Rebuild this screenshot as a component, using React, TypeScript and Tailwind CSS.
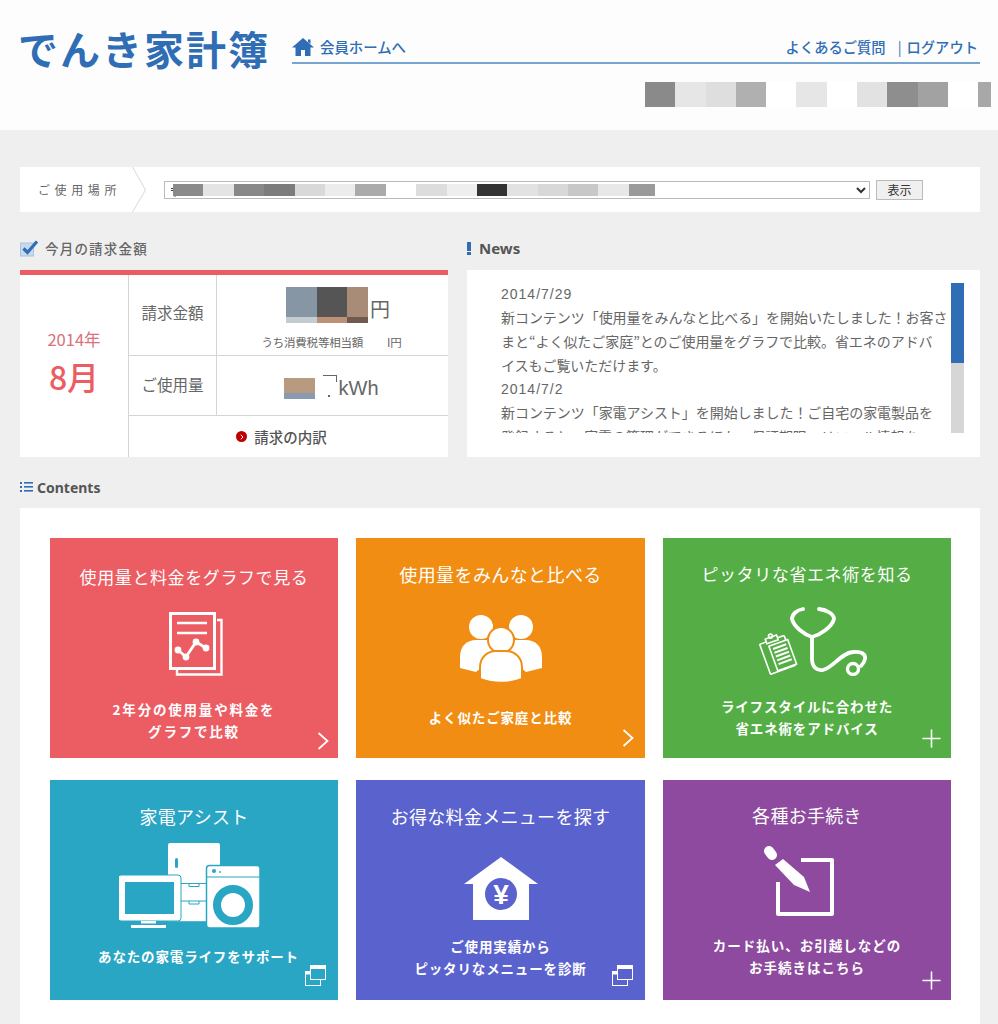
import { ChevronRight, Plus } from 'lucide-react'

const FONT = "font-['Noto_Sans_CJK_JP','Noto_Sans',sans-serif]"

const TOP_BLOCKS = ['bg-[#8a8a8a]', 'bg-[#e6e6e6]', 'bg-[#dedede]', 'bg-[#b0b0b0]', 'bg-white', 'bg-[#e6e6e6]', 'bg-white', 'bg-[#e2e2e2]', 'bg-[#8e8e8e]', 'bg-[#a2a2a2]', 'bg-white', 'bg-[#a8a8a8]']
const SELECT_BLOCKS = ['bg-[#8a8a8a]', 'bg-[#e4e4e4]', 'bg-[#888888]', 'bg-[#7c7c7c]', 'bg-[#d9d9d9]', 'bg-[#ececec]', 'bg-[#aaaaaa]', 'bg-white', 'bg-[#dddddd]', 'bg-[#eeeeee]', 'bg-[#333333]', 'bg-[#e2e2e2]', 'bg-[#d8d8d8]', 'bg-[#c8c8c8]', 'bg-[#e8e8e8]', 'bg-[#9a9a9a]']

function HomeIcon() {
  return (
    <svg width="22" height="18" viewBox="0 0 22 18" className="shrink-0">
      <path d="M11 0 L22 9.5 H18.5 V18 H13 V12 H9 V18 H3.5 V9.5 H0 Z M16 1.5 H18.5 V6 L16 4 Z" fill="#2f6db5" />
    </svg>
  )
}

function CheckIcon() {
  return (
    <svg width="19" height="17" viewBox="0 0 19 17" className="shrink-0">
      <rect x="0.5" y="3" width="13" height="13" fill="#c9d9ec" stroke="#a9c3e0" />
      <path d="M3.5 8.5 L7.5 12.5 L17 1.5" fill="none" stroke="#2f6db5" strokeWidth="3.2" />
    </svg>
  )
}

function ListIcon() {
  return (
    <svg width="13" height="10" viewBox="0 0 13 10" className="shrink-0">
      <g fill="#2f6db5">
        <rect x="0" y="0" width="2" height="2" />
        <rect x="0" y="4" width="2" height="2" />
        <rect x="0" y="8" width="2" height="2" />
        <rect x="4" y="0" width="9" height="1.6" />
        <rect x="4" y="4" width="9" height="1.6" />
        <rect x="4" y="8" width="9" height="1.6" />
      </g>
    </svg>
  )
}

function DocIcon() {
  return (
    <svg width="54" height="64" viewBox="0 0 54 64" fill="none" stroke="#fff">
      <rect x="1.5" y="1.5" width="44" height="55" strokeWidth="3" />
      <path d="M48 8 H52.5 V62.5 H8 V58" strokeWidth="2.4" />
      <path d="M8 11 H38 M8 21 H38" strokeWidth="2.6" />
      <path d="M9 38 L17 45 L27 30 L37 36" strokeWidth="2.8" />
      <g fill="#fff" stroke="none">
        <circle cx="9" cy="38" r="3.4" />
        <circle cx="17" cy="45" r="3.4" />
        <circle cx="27" cy="30" r="3.4" />
        <circle cx="37" cy="36" r="3.4" />
      </g>
    </svg>
  )
}

function PeopleIcon() {
  return (
    <svg width="82" height="68" viewBox="0 0 82 68">
      <g fill="#fff">
        <circle cx="21" cy="12" r="12" />
        <circle cx="61" cy="12" r="12" />
        <path d="M0 53 V42 C0 30 8 25 16 25 H28 L36 40 L16 57 Z" />
        <path d="M82 53 V42 C82 30 74 25 66 25 H54 L46 40 L66 57 Z" />
      </g>
      <circle cx="41" cy="25" r="13" fill="#fff" stroke="#f08d12" strokeWidth="2" />
      <path d="M20 64 V52 C20 42 28 36 36 36 H46 C54 36 62 42 62 52 V64 C50 69 32 69 20 64 Z" fill="#fff" stroke="#f08d12" strokeWidth="2" />
    </svg>
  )
}

function StethoscopeIcon() {
  return (
    <svg width="110" height="69" viewBox="0 0 110 69" fill="none" stroke="#fff" strokeLinecap="round">
      <path d="M46 2 C40 3 35 7 35 12 C37 20 48 28 55 30 C63 28 75 20 77 12 C77 7 70 3 62 2" strokeWidth="3.8" />
      <path d="M55 30 V52 C55 60 60 64 66 63 C76 61 84 46 96 45 C104 44 109 47 108 52 C107.5 55 106 57 104 59" strokeWidth="3.8" />
      <circle cx="96" cy="62" r="5.5" strokeWidth="3.4" />
      <g transform="rotate(-20 20 47)" strokeWidth="1.6">
        <rect x="7" y="32" width="26" height="32" rx="1" />
        <rect x="14" y="29" width="12" height="5" fill="#55ae45" />
        <circle cx="20" cy="28" r="2" />
        <rect x="15" y="37" width="20" height="26" fill="#55ae45" />
        <path d="M18 41 H32 M18 45 H32 M18 49 H32 M18 53 H32 M18 57 H32" strokeWidth="2" strokeLinecap="butt" />
      </g>
    </svg>
  )
}

function AppliancesIcon() {
  return (
    <svg width="141" height="85" viewBox="0 0 141 85">
      <path d="M51 0 H99 Q101 0 101 2 V40 H88 V77 H62 V40 H49 V2 Q49 0 51 0 Z" fill="#fff" />
      <rect x="56" y="15" width="3" height="10" rx="1.5" fill="#28a6c4" />
      <path d="M62 40.5 H88 M62 58 H88 M70 40.5 V43.5 H80 V40.5 M70 58 V61 H80 V58" fill="none" stroke="#28a6c4" strokeWidth="1" />
      <rect x="50" y="77" width="38" height="1.2" fill="#fff" />
      <rect x="87.5" y="22.5" width="53.5" height="62.5" rx="3" fill="#fff" stroke="#28a6c4" strokeWidth="1.5" />
      <rect x="88" y="33.5" width="53" height="1" fill="#28a6c4" />
      <circle cx="95" cy="28" r="2" fill="#28a6c4" />
      <circle cx="101" cy="29" r="0.9" fill="#28a6c4" />
      <circle cx="114" cy="62" r="16" fill="none" stroke="#28a6c4" strokeWidth="8" />
      <rect x="-1" y="32" width="63" height="46" rx="3" fill="#fff" stroke="#28a6c4" strokeWidth="1" />
      <rect x="6" y="39" width="49" height="32" fill="#28a6c4" />
      <rect x="22" y="78" width="15" height="2.5" fill="#fff" />
      <rect x="12" y="82" width="35" height="3" fill="#fff" />
    </svg>
  )
}

function YenHouseIcon() {
  return (
    <svg width="74" height="63" viewBox="0 0 74 63">
      <path d="M37 0 L74 27 H65 V63 H9 V27 H0 Z" fill="#fff" />
      <circle cx="37" cy="37" r="16" fill="#5a62cd" />
      <text x="37" y="47" textAnchor="middle" fontSize="28" fontWeight="700" fill="#fff" fontFamily="Liberation Sans, sans-serif">¥</text>
    </svg>
  )
}

function PencilIcon() {
  return (
    <svg width="70" height="70" viewBox="0 0 70 70">
      <path d="M37 14 H68 V68 H14 V36" fill="none" stroke="#fff" strokeWidth="4" strokeLinejoin="round" />
      <path d="M5 5 L8 9" stroke="#fff" strokeWidth="10" strokeLinecap="round" />
      <path d="M11 19 L19 13 L40 31 L46 46 L30 39 Z" fill="#fff" />
    </svg>
  )
}

function CornerChevron({ className }: { className: string }) {
  return (
    <svg width="12" height="18" viewBox="0 0 12 18" className={`absolute ${className}`}>
      <path d="M1.5 1 L10.5 9 L1.5 17" fill="none" stroke="#fff" strokeWidth="1.8" />
    </svg>
  )
}

function WindowIcon() {
  return (
    <svg width="21" height="21" viewBox="0 0 21 21" className="absolute right-[12px] bottom-[14px]">
      <rect x="0.5" y="6.5" width="15" height="14" fill="none" stroke="#fff" />
      <rect x="0.5" y="6.5" width="5" height="3" fill="#fff" />
      <rect x="5.5" y="0.5" width="15" height="14" fill="currentColor" stroke="#fff" />
      <rect x="5.5" y="0.5" width="15" height="3.5" fill="#fff" />
    </svg>
  )
}

const TILES = [
  { title: '使用量と料金をグラフで見る', sub: ['2年分の使用量や料金を', 'グラフで比較'], bg: 'bg-[#eb5c63] text-[#eb5c63]', titleCls: 'mt-[27px] text-[17px] tracking-[0.6px]', iconCls: 'mt-[23px] h-[64px] ml-[4px]', subCls: 'mt-[22px] tracking-[1.8px]', icon: <DocIcon />, corner: 'chevron', chevronCls: 'right-[9px] bottom-[8px]' },
  { title: '使用量をみんなと比べる', sub: ['よく似たご家庭と比較'], bg: 'bg-[#f08d12] text-[#f08d12]', titleCls: 'mt-[24px] text-[18px] tracking-[0.4px]', iconCls: 'mt-[29px] h-[68px]', subCls: 'mt-[23px] tracking-[0.85px]', icon: <PeopleIcon />, corner: 'chevron', chevronCls: 'right-[11px] bottom-[11px]' },
  { title: 'ピッタリな省エネ術を知る', sub: ['ライフスタイルに合わせた', '省エネ術をアドバイス'], bg: 'bg-[#55ae45] text-[#55ae45]', titleCls: 'mt-[24px] text-[17px] tracking-[0.6px]', iconCls: 'mt-[21px] h-[69px] ml-[10px]', subCls: 'mt-[19px] tracking-[0.85px]', icon: <StethoscopeIcon />, corner: 'plus', chevronCls: '' },
  { title: '家電アシスト', sub: ['あなたの家電ライフをサポート'], bg: 'bg-[#28a6c4] text-[#28a6c4]', titleCls: 'mt-[24px] text-[18px] tracking-[0.3px]', iconCls: 'mt-[15px] h-[85px] ml-[-10px]', subCls: 'mt-[17px] ml-[9px] tracking-[0.85px]', icon: <AppliancesIcon />, corner: 'window', chevronCls: '' },
  { title: 'お得な料金メニューを探す', sub: ['ご使用実績から', 'ピッタリなメニューを診断'], bg: 'bg-[#5a62cd] text-[#5a62cd]', titleCls: 'mt-[24px] text-[18px] tracking-[0.3px]', iconCls: 'mt-[29px] h-[63px]', subCls: 'mt-[15px] tracking-[0.85px]', icon: <YenHouseIcon />, corner: 'window', chevronCls: '' },
  { title: '各種お手続き', sub: ['カード払い、お引越しなどの', 'お手続きはこちら'], bg: 'bg-[#8d4a9e] text-[#8d4a9e]', titleCls: 'mt-[23px] text-[18px] tracking-[0.3px]', iconCls: 'mt-[19px] h-[70px] ml-[-16px]', subCls: 'mt-[18px] tracking-[1px]', icon: <PencilIcon />, corner: 'plus', chevronCls: '' },
]

function Tile({ tile }: { tile: (typeof TILES)[number] }) {
  return (
    <div className={`relative h-[220px] flex flex-col items-center ${tile.bg}`}>
      <div className={`text-white leading-[24px] ${tile.titleCls}`}>{tile.title}</div>
      <div className={tile.iconCls}>{tile.icon}</div>
      <div className={`text-white text-[13.5px] leading-[22px] font-bold text-center ${tile.subCls}`}>
        {tile.sub.map((line) => <div key={line}>{line}</div>)}
      </div>
      {tile.corner === 'chevron' && <CornerChevron className={tile.chevronCls} />}
      {tile.corner === 'plus' && <Plus className="absolute right-[5px] bottom-[5px] text-white" size={29} strokeWidth={1.3} />}
      {tile.corner === 'window' && <WindowIcon />}
    </div>
  )
}

export default function App() {
  return (
    <div className={`h-screen overflow-hidden bg-[#efefef] text-[#666] ${FONT}`}>
      {/* Header */}
      <header className="h-[130px] bg-[#fdfdfd] pl-[20px] pr-[18px]">
        <div className="flex items-start">
          <div className="mt-[23px] ml-[-2px] w-[274px] text-[40px] leading-[50px] font-bold tracking-[2px] text-[#2f6db5] whitespace-nowrap">でんき家計簿</div>
          <div className="flex-1 mt-[38px] h-[26px] border-b-2 border-[#78a6d0] flex items-start justify-between">
            <div className="flex items-center gap-[6px] text-[14.4px] leading-[18px] font-medium text-[#2f6db5]">
              <HomeIcon />
              <span>会員ホームへ</span>
            </div>
            <div className="flex items-center text-[14.3px] leading-[18px] font-medium text-[#2f6db5] mr-[2px]">
              <span>よくあるご質問</span>
              <span className="ml-[12px] mr-[5px] font-normal">|</span>
              <span>ログアウト</span>
            </div>
          </div>
        </div>
        <div className="mt-[9px] ml-[625px] flex">
          {TOP_BLOCKS.map((cls, i) => (
            <div key={i} className={`h-[25px] shrink-0 ${i === 11 ? 'w-[13px]' : 'w-[30.3px]'} ${cls}`} />
          ))}
        </div>
      </header>

      <main className="ml-[20px] w-[960px] pt-[37px]">
        {/* Location bar */}
        <div className="h-[45px] bg-white flex items-center">
          <div className="pl-[18px] w-[112px] text-[12px] tracking-[4.6px] whitespace-nowrap">ご使用場所</div>
          <svg width="14" height="45" viewBox="0 0 14 45" className="shrink-0">
            <path d="M0.5 0 L13.5 23 L0.5 45" fill="none" stroke="#d8d8d8" />
          </svg>
          <div className="relative ml-[18px] w-[706px] h-[18px]">
            <select className="block w-full h-full border border-[#bbbbbb] bg-white text-[12px] leading-[16px] text-[#333]">
              <option>〒</option>
            </select>
            <div className="absolute left-[9px] top-[3px] flex pointer-events-none">
              {SELECT_BLOCKS.map((cls, i) => (
                <div key={i} className={`h-[12px] ${i === 15 ? 'w-[26px]' : 'w-[30.4px]'} ${cls}`} />
              ))}
            </div>
          </div>
          <button className="ml-[6px] w-[47px] h-[20px] border border-[#bbb] bg-[#f0f0f0] text-[12px] leading-[18px] text-[#333]">表示</button>
        </div>

        <div className="flex gap-[19px]">
          {/* Bill */}
          <section className="w-[428px]">
            <h2 className="mt-[24px] mb-[10px] h-[24px] flex items-center gap-[6px] text-[13.5px] font-medium tracking-[1.2px] text-[#666]">
              <CheckIcon />
              今月の請求金額
            </h2>
            <div className="h-[5px] bg-[#eb5c63]" />
            <div className="grid grid-cols-[109px_88px_231px] grid-rows-[81px_60px_41px] bg-white">
              <div className="row-span-3 border-r border-[#d5d5d5] flex flex-col items-center justify-center pb-[6px]">
                <div className="text-[16.5px] leading-[20px] text-[#d9707a]">2014年</div>
                <div className="text-[32px] leading-[42px] font-medium text-[#eb5c63] mt-[6px]">8月</div>
              </div>
              <div className="border-r border-b border-[#d5d5d5] flex items-center justify-center text-[15.5px] pb-[5px]">請求金額</div>
              <div className="border-b border-[#d5d5d5] flex flex-col items-center">
                <div className="mt-[12px] flex items-center ml-[11px]">
                  <div className="grid grid-cols-[31px_30px_21px] grid-rows-[30px_6px]">
                    <div className="bg-[#8696a5]" />
                    <div className="bg-[#555555]" />
                    <div className="bg-[#a98c78]" />
                    <div className="bg-[#c4ccd0]" />
                    <div className="bg-[#bd9177]" />
                    <div className="bg-[#6e5a4e]" />
                  </div>
                  <span className="text-[20px] leading-[24px] ml-[2px] mt-[8px]">円</span>
                </div>
                <div className="mt-[11px] flex text-[11.5px] leading-[16px] tracking-[-0.2px] ml-[-2px]">
                  <span>うち消費税等相当額</span>
                  <span className="ml-[24px]">I円</span>
                </div>
              </div>
              <div className="border-r border-b border-[#d5d5d5] flex items-center justify-center text-[15.5px] pb-[2px]">ご使用量</div>
              <div className="border-b border-[#d5d5d5] flex items-center justify-center">
                <div className="flex items-end mb-[-2px] ml-[-3px]">
                  <div className="grid grid-rows-[15px_6px] w-[31px]">
                    <div className="bg-[#b89a80]" />
                    <div className="bg-[#8a9ab0]" />
                  </div>
                  <div className="ml-[8px] w-[14px] h-[24px] flex flex-col justify-between items-start">
                    <span className="block w-full h-[7px] border-t border-r border-[#666]" />
                    <span className="block ml-[5px] mb-[2px] w-[2px] h-[2px] bg-[#666]" />
                  </div>
                  <span className="ml-[2px] text-[20px] leading-[22px] font-['Liberation_Sans',sans-serif]">kWh</span>
                </div>
              </div>
              <div className="col-span-2 flex items-center justify-center gap-[7px] pr-[14px] text-[14.5px] font-medium text-[#555]">
                <span className="w-[11px] h-[11px] rounded-full bg-[#c00000] flex items-center justify-center">
                  <ChevronRight className="text-white" size={8} strokeWidth={3} />
                </span>
                請求の内訳
              </div>
            </div>
          </section>

          {/* News */}
          <section className="w-[513px]">
            <h2 className="mt-[24px] mb-[10px] h-[24px] flex items-center gap-[8px] text-[15px] font-bold text-[#555] font-['Noto_Sans',sans-serif]">
              <span className="w-[4px] h-[13px] flex flex-col gap-[1.5px]">
                <span className="h-[9px] bg-[#2f6db5]" />
                <span className="h-[2.5px] bg-[#2f6db5]" />
              </span>
              News
            </h2>
            <div className="h-[187px] bg-white pt-[13px] pl-[34px] flex">
              <div className="w-[450px] h-[150px] overflow-hidden text-[14px] leading-[24px] text-[#666] whitespace-nowrap tracking-[-0.05px]">
                <div className="mt-[1px] leading-[21px] font-['Liberation_Sans',sans-serif] tracking-[1px]">2014/7/29</div>
                <div>新コンテンツ「使用量をみんなと比べる」を開始いたしました！お客さ</div>
                <div>まと“よく似たご家庭”とのご使用量をグラフで比較。省エネのアドバ</div>
                <div>イスもご覧いただけます。</div>
                <div className="mt-[2px] leading-[21px] font-['Liberation_Sans',sans-serif] tracking-[1px]">2014/7/2</div>
                <div>新コンテンツ「家電アシスト」を開始しました！ご自宅の家電製品を</div>
                <div>登録すると、家電の管理ができるほか、保証期限、リコール情報を</div>
              </div>
              <div className="w-[13px] h-[150px] bg-[#d6d6d6]">
                <div className="h-[80px] bg-[#2f6db5]" />
              </div>
            </div>
          </section>
        </div>

        {/* Contents */}
        <h2 className="mt-[18px] mb-[9px] h-[24px] flex items-center gap-[4px] text-[14px] font-bold text-[#555] font-['Noto_Sans',sans-serif]">
          <ListIcon />
          Contents
        </h2>
        <div className="bg-white pt-[30px] pl-[30px] pb-[30px]">
          <div className="grid grid-cols-[288px_289px_288px] gap-x-[18px] gap-y-[22px]">
            {TILES.map((tile) => <Tile key={tile.title} tile={tile} />)}
          </div>
        </div>
      </main>
    </div>
  )
}
